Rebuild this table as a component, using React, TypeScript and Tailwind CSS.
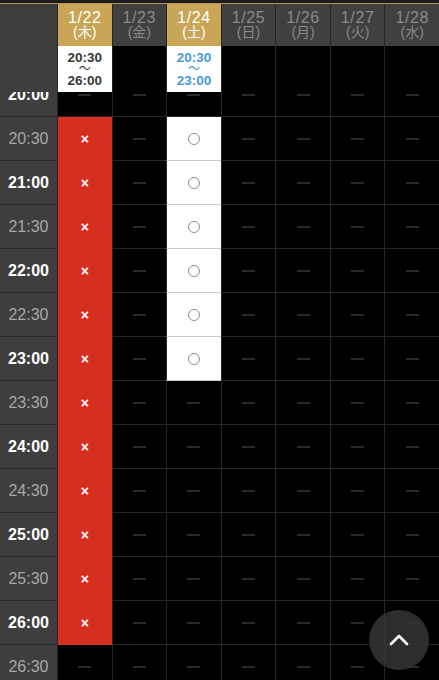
import React from "react";

type Cell = "dash" | "x" | "o";

const days = [
  { d: "1/22", w: "(木)", active: true, range: "20:30", end: "26:00", blue: false },
  { d: "1/23", w: "(金)", active: false },
  { d: "1/24", w: "(土)", active: true, range: "20:30", end: "23:00", blue: true },
  { d: "1/25", w: "(日)", active: false },
  { d: "1/26", w: "(月)", active: false },
  { d: "1/27", w: "(火)", active: false },
  { d: "1/28", w: "(水)", active: false },
];

const times = [
  "20:00", "20:30", "21:00", "21:30", "22:00", "22:30", "23:00",
  "23:30", "24:00", "24:30", "25:00", "25:30", "26:00", "26:30",
];

function cellFor(dayIdx: number, t: string): Cell {
  const [h, m] = t.split(":").map(Number);
  const v = h * 60 + m;
  if (dayIdx === 0 && v >= 20 * 60 + 30 && v <= 26 * 60) return "x";
  if (dayIdx === 2 && v >= 20 * 60 + 30 && v <= 23 * 60) return "o";
  return "dash";
}

export default function App() {
  return (
    <div
      className="relative w-[439px] h-[680px] overflow-hidden bg-black"
      style={{ fontFamily: '"Liberation Sans", Arial, "Noto Sans CJK JP", sans-serif' }}
    >
      <div className="h-[3px] bg-[#1c1c1c]" />
      <div className="h-px bg-[#b39356]" />
      {/* header */}
      <div className="relative z-10">
        <div className="grid grid-cols-[57px_repeat(7,minmax(0,1fr))]">
          <div className="row-span-2 bg-[#3e3e3e]" />
          {days.map((d) => (
            <div
              key={d.d}
              className={
                "h-[42px] flex flex-col items-center justify-center border-l border-[#262626] " +
                (d.active ? "bg-[#c9a657] text-white" : "bg-[#404040] text-[#8a8a8a]")
              }
            >
              <span className="text-[16px] leading-[15px] tracking-[0.6px]">{d.d}</span>
              <span className="text-[14px] leading-[15px]">{d.w}</span>
            </div>
          ))}
          {days.map((d) => (
            <div
              key={d.d + "r"}
              className={
                "h-[46px] flex flex-col items-center justify-center border-l border-[#262626] font-bold " +
                (d.range ? "bg-white " : "bg-black ") +
                (d.blue ? "text-[#4a9ad4]" : "text-[#383838]")
              }
            >
              {d.range && (
                <>
                  <span className="text-[13.5px] leading-[13px]">{d.range}</span>
                  <span className="text-[12px] leading-[10px] font-normal">〜</span>
                  <span className="text-[13.5px] leading-[13px]">{d.end}</span>
                </>
              )}
            </div>
          ))}
        </div>
      </div>
      {/* body */}
      <div className="-mt-[19px]">
        {times.map((t) => {
          const bold = t.endsWith(":00");
          return (
            <div key={t} className="grid grid-cols-[57px_repeat(7,minmax(0,1fr))] h-[44px]">
              <div
                className={
                  "flex items-center justify-center bg-[#3e3e3e] border-b border-[#2a2a2a] text-[16px] " +
                  (bold ? "font-bold text-white" : "text-[#a8a8a8]")
                }
              >
                {t}
              </div>
              {days.map((_, i) => {
                const c = cellFor(i, t);
                if (c === "x")
                  return (
                    <div
                      key={i}
                      className="flex items-center justify-center bg-[#d5301f] border-l border-[#262626] text-white text-[14px] font-bold"
                    >
                      ×
                    </div>
                  );
                if (c === "o")
                  return (
                    <div
                      key={i}
                      className="flex items-center justify-center bg-white border-l border-b border-l-[#262626] border-b-[#c8c8c8]"
                    >
                      <div className="w-3 h-3 rounded-full border border-[#8c8c8c]" />
                    </div>
                  );
                return (
                  <div
                    key={i}
                    className="flex items-center justify-center bg-black border-l border-b border-[#262626]"
                  >
                    <div className="w-[13px] h-[2px] bg-[#2a2a2a]" />
                  </div>
                );
              })}
            </div>
          );
        })}
      </div>
      {/* scroll top button */}
      <button className="absolute right-[10px] bottom-[10px] w-[60px] h-[60px] rounded-full bg-[#353535]/85 flex items-center justify-center">
        <svg width="22" height="14" viewBox="0 0 22 14" fill="none">
          <path d="M3 11 L11 3 L19 11" stroke="white" strokeWidth="2.6" strokeLinecap="round" strokeLinejoin="round" />
        </svg>
      </button>
    </div>
  );
}
